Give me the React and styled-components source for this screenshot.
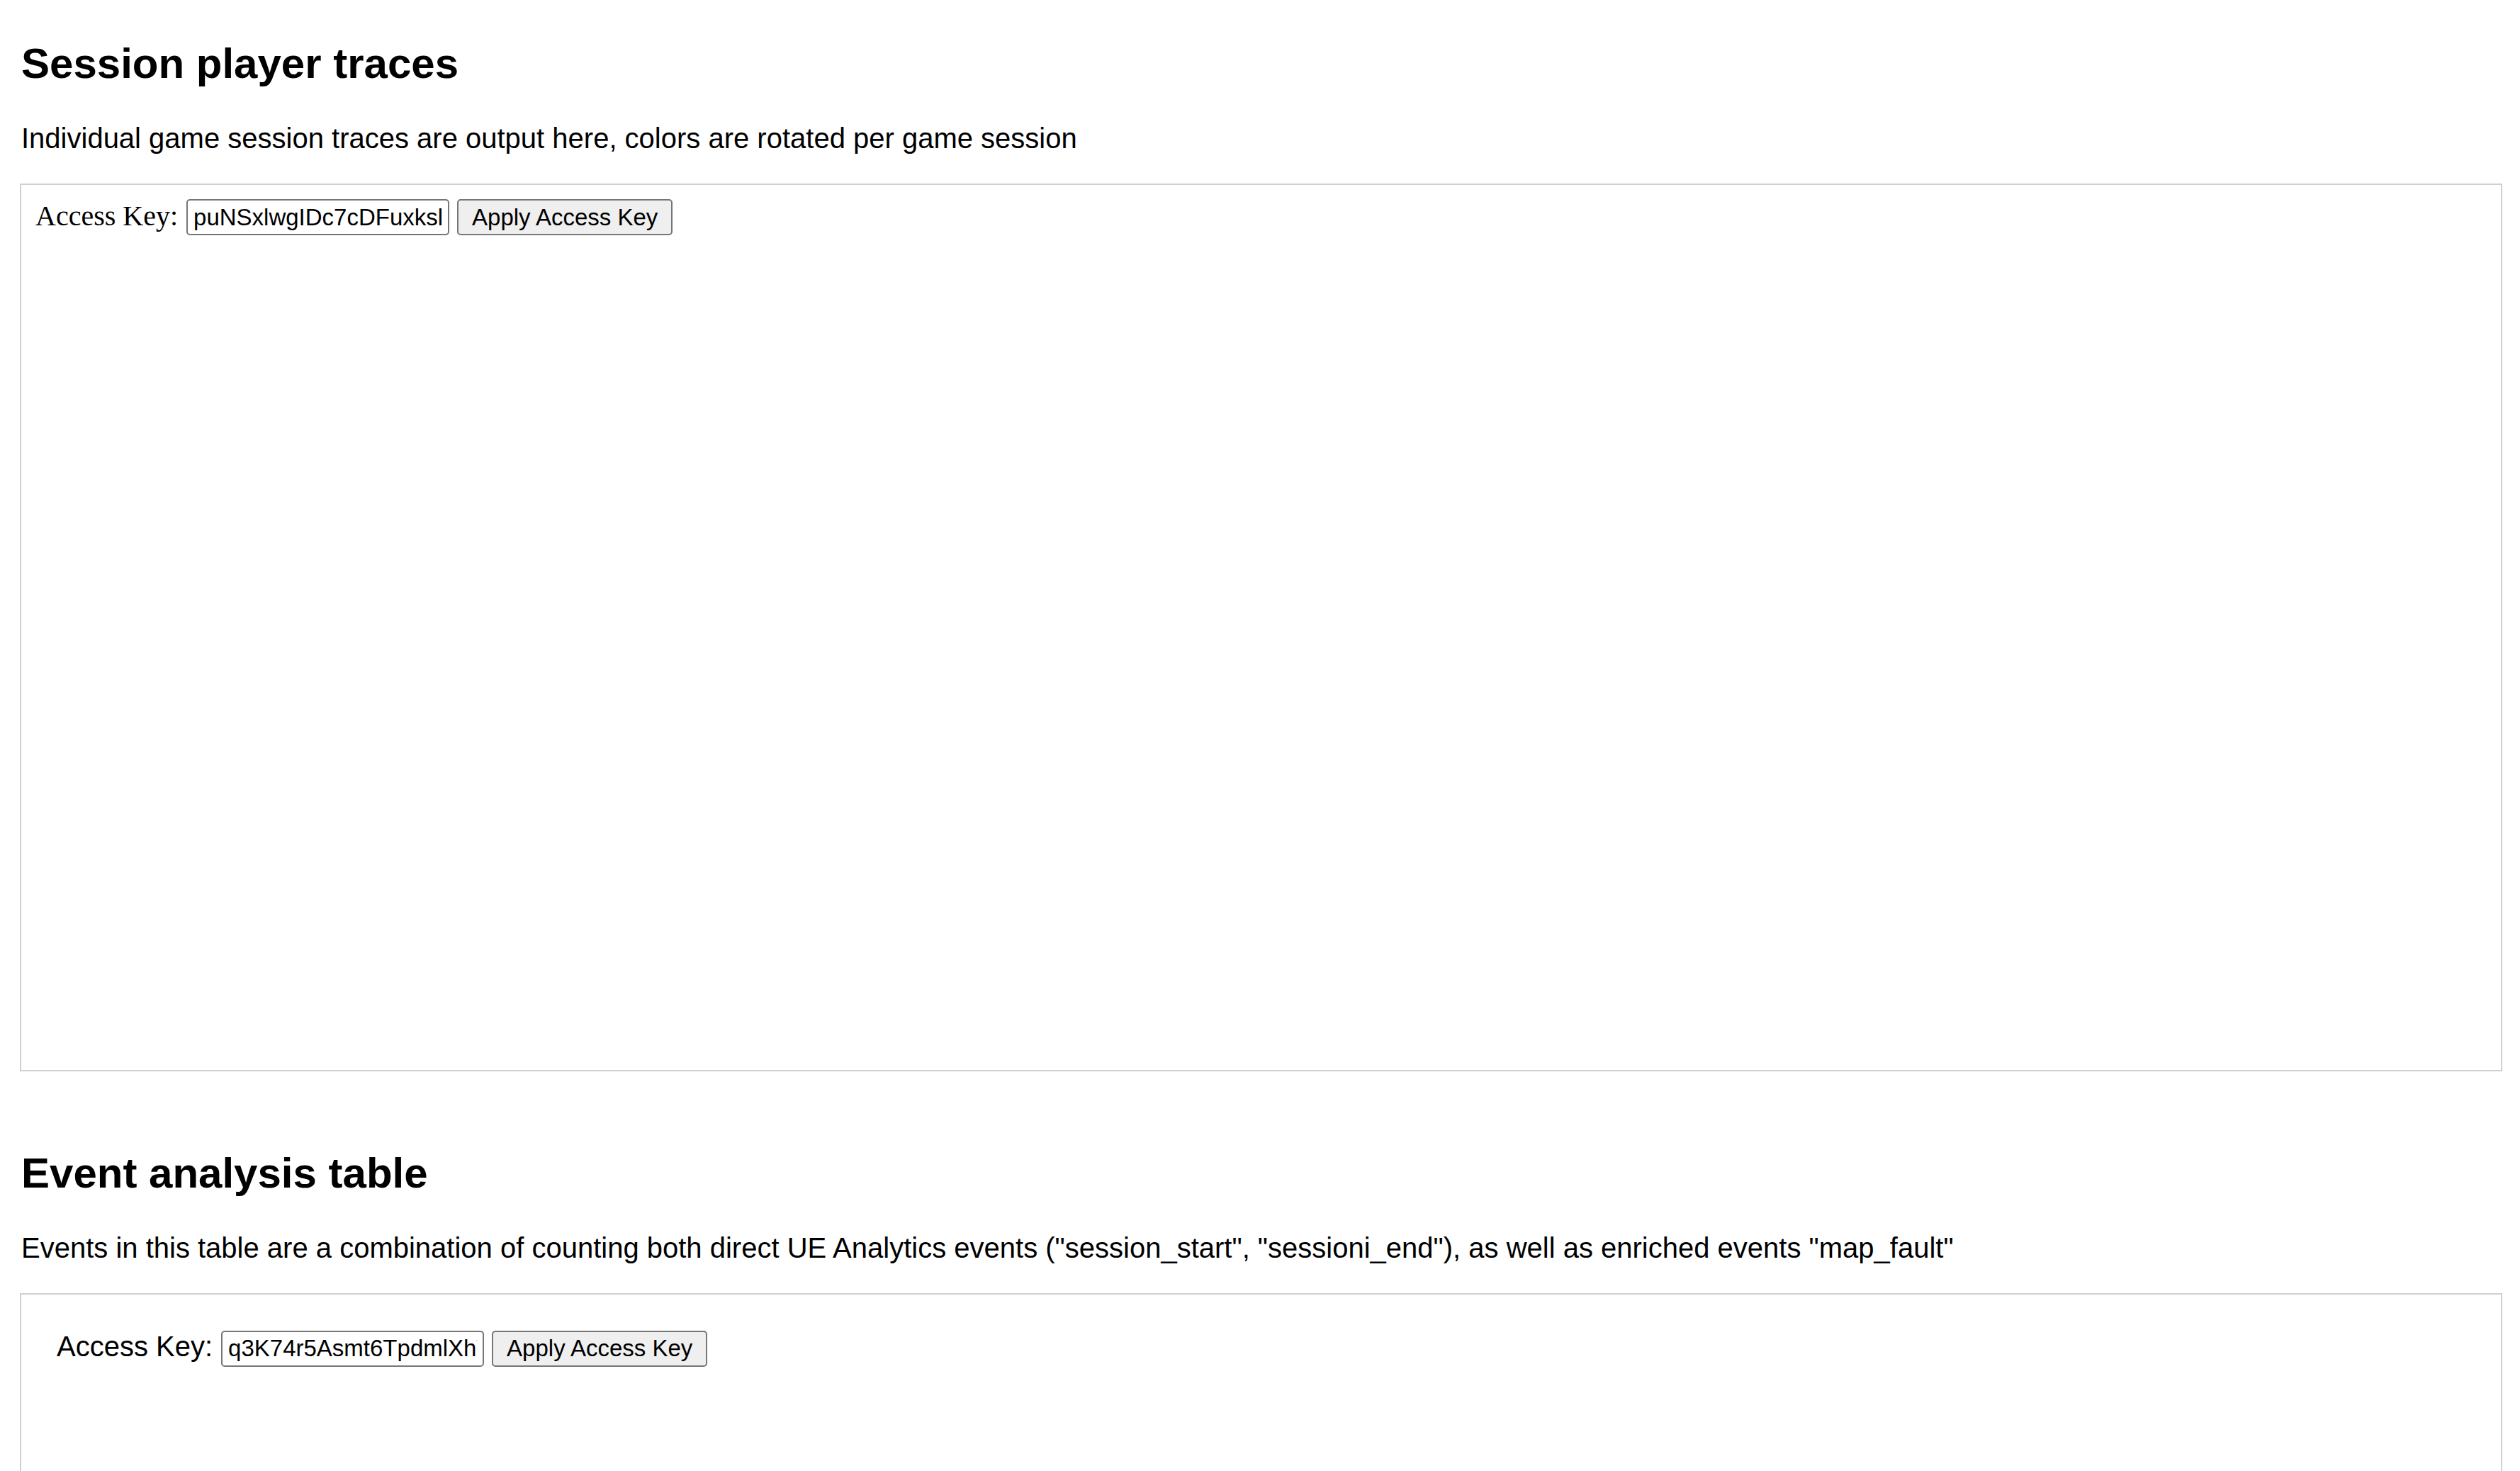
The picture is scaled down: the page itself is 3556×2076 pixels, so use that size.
import React, { useState } from "react";
import styled, { createGlobalStyle } from "styled-components";

const GlobalStyle = createGlobalStyle`
  html, body {
    margin: 0;
    padding: 0;
    background: #fff;
    overflow: hidden;
  }
  body {
    font-family: "Liberation Sans", Arial, sans-serif;
    color: #000;
  }
`;

const Page = styled.main`
  display: flex;
  flex-direction: column;
  padding: 55px 25px 0 28px;
`;

const Section = styled.section`
  display: flex;
  flex-direction: column;
  & + & {
    margin-top: 109px;
  }
`;

const Title = styled.h2`
  margin: 0 0 48px 2px;
  font-size: 60px;
  line-height: 69px;
  font-weight: 700;
`;

const Desc = styled.p`
  margin: 0 0 41px 2px;
  font-size: 40px;
  line-height: 46px;
`;

const Panel = styled.div`
  box-sizing: border-box;
  height: ${(p) => p.$height}px;
  border: 2px solid #d0d0d0;
  padding: ${(p) => p.$pad}px;
`;

const KeyRow = styled.div`
  display: flex;
  align-items: baseline;
  gap: 11px;
`;

const Label = styled.label`
  font-family: ${(p) =>
    p.$serif ? '"Liberation Serif", "Times New Roman", serif' : '"Liberation Sans", Arial, sans-serif'};
  font-size: 40px;
  line-height: 46px;
  margin-right: 1px;
`;

const KeyInput = styled.input`
  box-sizing: border-box;
  width: 371px;
  height: 51px;
  padding: 0 8px;
  border: 2px solid #767676;
  border-radius: 5px;
  font-family: "Liberation Sans", Arial, sans-serif;
  font-size: 33px;
  color: #000;
  background: #fff;
  outline: none;
`;

const ApplyButton = styled.button`
  box-sizing: border-box;
  height: 51px;
  padding: 0 19px;
  border: 2px solid #767676;
  border-radius: 5px;
  background: #efefef;
  font-family: "Liberation Sans", Arial, sans-serif;
  font-size: 33px;
  color: #000;
  cursor: pointer;
`;

function AccessKeyForm({ initialKey, serifLabel }) {
  const [value, setValue] = useState(initialKey);
  return (
    <KeyRow>
      <Label $serif={serifLabel}>Access Key:</Label>
      <KeyInput value={value} onChange={(e) => setValue(e.target.value)} />
      <ApplyButton>Apply Access Key</ApplyButton>
    </KeyRow>
  );
}

export default function App() {
  return (
    <>
      <GlobalStyle />
      <Page>
        <Section>
          <Title>Session player traces</Title>
          <Desc>Individual game session traces are output here, colors are rotated per game session</Desc>
          <Panel $height={1253} $pad={20}>
            <AccessKeyForm initialKey="puNSxlwgIDc7cDFuxkslQm8Rw2Ze" serifLabel />
          </Panel>
        </Section>
        <Section>
          <Title>Event analysis table</Title>
          <Desc>
            Events in this table are a combination of counting both direct UE Analytics events ("session_start",
            "sessioni_end"), as well as enriched events "map_fault"
          </Desc>
          <Panel $height={1253} $pad={50}>
            <AccessKeyForm initialKey="q3K74r5Asmt6TpdmlXhWvB9kLe" />
          </Panel>
        </Section>
      </Page>
    </>
  );
}
